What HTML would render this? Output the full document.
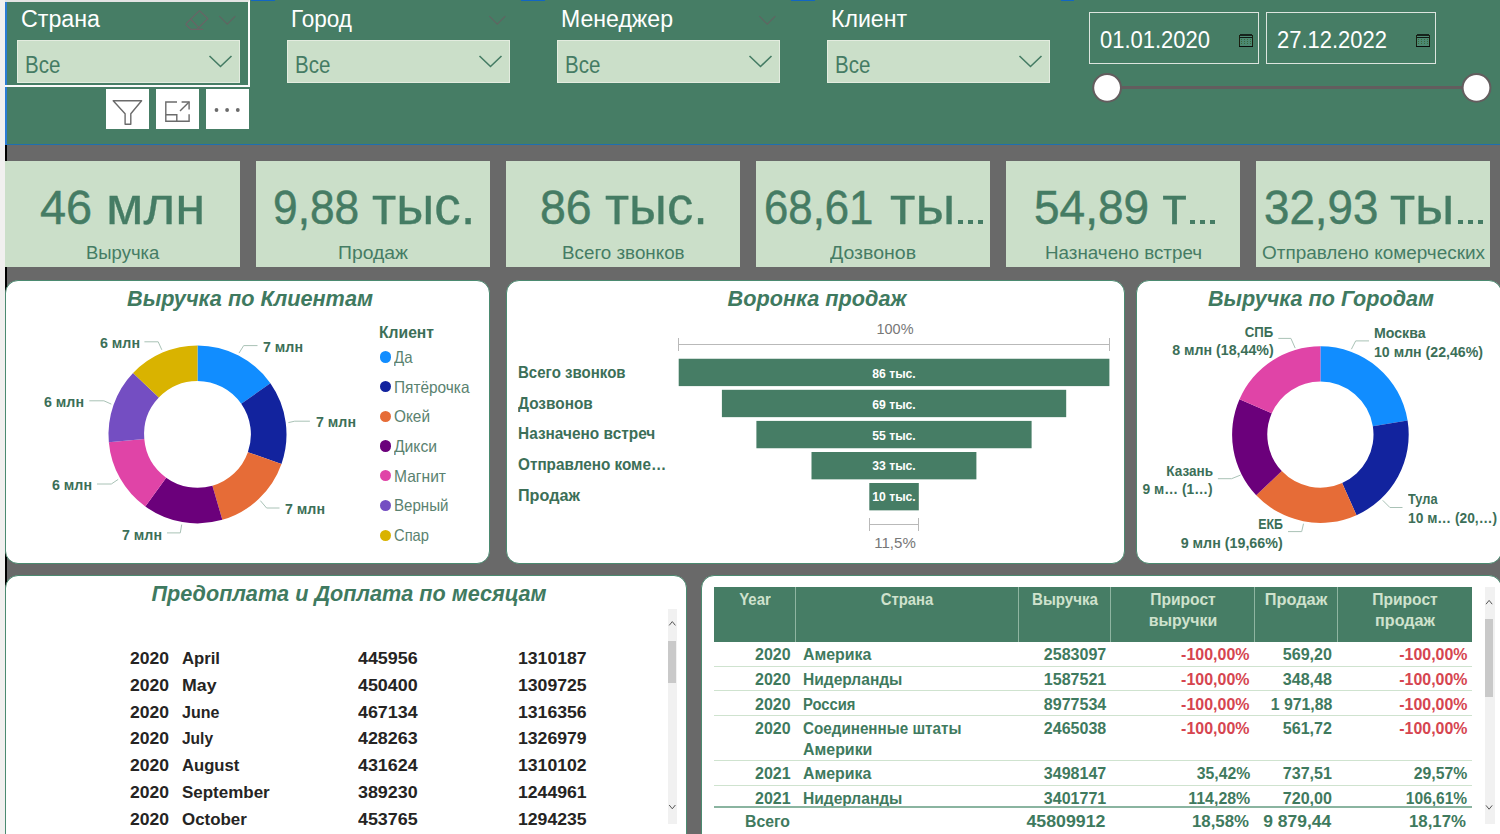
<!DOCTYPE html>
<html><head><meta charset="utf-8"><title>Dashboard</title>
<style>
html,body{margin:0;padding:0;}
body{width:1500px;height:834px;overflow:hidden;position:relative;background:#696969;font-family:"Liberation Sans", sans-serif;}
#c{position:absolute;left:0;top:0;width:1500px;height:834px;overflow:hidden;}
#c div{position:absolute;box-sizing:border-box;}
#c svg{position:absolute;left:0;top:0;overflow:visible;}
.t{white-space:nowrap;}
.p{background:#fff;border:1px solid #4b8a70;border-radius:13px;}
</style></head><body><div id="c">
<div style="left:0px;top:0px;width:1500px;height:144px;background:#467d65;"></div>
<div style="left:0px;top:144px;width:1500px;height:1px;background:#1f6fb0;"></div>
<div style="left:0px;top:0px;width:5px;height:834px;background:#f1f0ef;"></div>
<div style="left:5px;top:0px;width:2px;height:145px;background:#2b7cd3;"></div>
<div style="left:5px;top:145px;width:2px;height:689px;background:#000;"></div>
<div class="t" style="font-size:23px;line-height:23px;color:#fff;left:21px;top:7.51px;transform:scaleX(1.0098);transform-origin:left center;"><span>Страна</span></div>
<div style="left:17px;top:40px;width:223px;height:43px;background:#cbdfc9;border:1px solid #e3ecdf;"></div>
<div class="t" style="font-size:23px;line-height:23px;color:#457c64;left:25.3px;top:53.6px;transform:scaleX(0.893);transform-origin:left center;"><span>Все</span></div>
<svg width="1500" height="834"><path d="M209.5,56 L220.5,66.5 L231.5,56" fill="none" stroke="#457c64" stroke-width="1.6"/><path d="M219.3,16.1 L227.3,24.1 L235.3,16.1" fill="none" stroke="#5f6562" stroke-width="1.3"/></svg>
<div class="t" style="font-size:23px;line-height:23px;color:#fff;left:291px;top:7.51px;transform:scaleX(0.9804);transform-origin:left center;"><span>Город</span></div>
<div style="left:287px;top:40px;width:223px;height:43px;background:#cbdfc9;border:1px solid #e3ecdf;"></div>
<div class="t" style="font-size:23px;line-height:23px;color:#457c64;left:295.3px;top:53.6px;transform:scaleX(0.893);transform-origin:left center;"><span>Все</span></div>
<svg width="1500" height="834"><path d="M479.5,56 L490.5,66.5 L501.5,56" fill="none" stroke="#457c64" stroke-width="1.6"/><path d="M489.3,16.1 L497.3,24.1 L505.3,16.1" fill="none" stroke="#5f6562" stroke-width="1.3"/></svg>
<div class="t" style="font-size:23px;line-height:23px;color:#fff;left:561px;top:7.51px;transform:scaleX(1.0036);transform-origin:left center;"><span>Менеджер</span></div>
<div style="left:557px;top:40px;width:223px;height:43px;background:#cbdfc9;border:1px solid #e3ecdf;"></div>
<div class="t" style="font-size:23px;line-height:23px;color:#457c64;left:565.3px;top:53.6px;transform:scaleX(0.893);transform-origin:left center;"><span>Все</span></div>
<svg width="1500" height="834"><path d="M749.5,56 L760.5,66.5 L771.5,56" fill="none" stroke="#457c64" stroke-width="1.6"/><path d="M759.3,16.1 L767.3,24.1 L775.3,16.1" fill="none" stroke="#5f6562" stroke-width="1.3"/></svg>
<div class="t" style="font-size:23px;line-height:23px;color:#fff;left:831px;top:7.51px;transform:scaleX(1.0039);transform-origin:left center;"><span>Клиент</span></div>
<div style="left:827px;top:40px;width:223px;height:43px;background:#cbdfc9;border:1px solid #e3ecdf;"></div>
<div class="t" style="font-size:23px;line-height:23px;color:#457c64;left:835.3px;top:53.6px;transform:scaleX(0.893);transform-origin:left center;"><span>Все</span></div>
<svg width="1500" height="834"><path d="M1019.5,56 L1030.5,66.5 L1041.5,56" fill="none" stroke="#457c64" stroke-width="1.6"/></svg>
<div style="left:5px;top:0px;width:245px;height:87px;background:transparent;border:2px solid #fbfbfb;border-top-color:#e4e4e4;border-left:0;"></div>
<div style="left:106px;top:89px;width:43px;height:40px;background:#fff;"></div>
<div style="left:156px;top:89px;width:43px;height:40px;background:#fff;"></div>
<div style="left:206px;top:89px;width:43px;height:40px;background:#fff;"></div>
<div style="left:1089px;top:12px;width:170px;height:52px;background:transparent;border:1px solid #dde5df;"></div>
<div style="left:1266px;top:12px;width:170px;height:52px;background:transparent;border:1px solid #dde5df;"></div>
<div class="t" style="font-size:23px;line-height:23px;color:#fff;left:1100px;top:29.01px;transform:scaleX(0.9555);transform-origin:left center;"><span>01.01.2020</span></div>
<div class="t" style="font-size:23px;line-height:23px;color:#fff;left:1277px;top:29.01px;transform:scaleX(0.9555);transform-origin:left center;"><span>27.12.2022</span></div>
<div style="left:1107px;top:86.3px;width:370px;height:3px;background:#635d5e;"></div>
<svg width="1500" height="834"><circle cx="1107.1" cy="87.8" r="13.9" fill="#fff" stroke="#635d5e" stroke-width="2"/><circle cx="1476.5" cy="87.8" r="13.9" fill="#fff" stroke="#635d5e" stroke-width="2"/></svg>
<div style="left:5px;top:161px;width:235px;height:106px;background:#cbdfc9;"></div>
<div class="t" style="font-size:49px;line-height:49px;color:#457c64;-webkit-text-stroke:0.5px #457c64;left:39.8px;top:182.81px;transform:scaleX(0.9557);transform-origin:left center;"><span>46</span></div>
<div class="t" style="font-size:53.5px;line-height:53.5px;color:#457c64;-webkit-text-stroke:0.3px #457c64;left:106.2px;top:179.01px;transform:scaleX(1.018);transform-origin:left center;"><span>млн</span></div>
<div class="t" style="font-size:17.5px;line-height:17.5px;color:#457c64;left:85.7px;top:244.52px;transform:scaleX(1.0556);transform-origin:left center;"><span>Выручка</span></div>
<div style="left:256px;top:161px;width:234px;height:106px;background:#cbdfc9;"></div>
<div class="t" style="font-size:49px;line-height:49px;color:#457c64;-webkit-text-stroke:0.5px #457c64;left:272.9px;top:182.81px;transform:scaleX(0.9038);transform-origin:left center;"><span>9,88</span></div>
<div class="t" style="font-size:53.5px;line-height:53.5px;color:#457c64;-webkit-text-stroke:0.3px #457c64;left:372px;top:179.01px;transform:scaleX(0.9897);transform-origin:left center;"><span>тыс.</span></div>
<div class="t" style="font-size:17.5px;line-height:17.5px;color:#457c64;left:338px;top:244.52px;transform:scaleX(1.1056);transform-origin:left center;"><span>Продаж</span></div>
<div style="left:506px;top:161px;width:234px;height:106px;background:#cbdfc9;"></div>
<div class="t" style="font-size:49px;line-height:49px;color:#457c64;-webkit-text-stroke:0.5px #457c64;left:540.2px;top:182.81px;transform:scaleX(0.9484);transform-origin:left center;"><span>86</span></div>
<div class="t" style="font-size:53.5px;line-height:53.5px;color:#457c64;-webkit-text-stroke:0.3px #457c64;left:604.7px;top:179.01px;transform:scaleX(0.983);transform-origin:left center;"><span>тыс.</span></div>
<div class="t" style="font-size:17.5px;line-height:17.5px;color:#457c64;left:561.7px;top:244.52px;transform:scaleX(1.074);transform-origin:left center;"><span>Всего звонков</span></div>
<div style="left:756px;top:161px;width:234px;height:106px;background:#cbdfc9;"></div>
<div class="t" style="font-size:49px;line-height:49px;color:#457c64;-webkit-text-stroke:0.5px #457c64;left:764.2px;top:182.81px;transform:scaleX(0.8922);transform-origin:left center;"><span>68,61</span></div>
<div class="t" style="font-size:53.5px;line-height:53.5px;color:#457c64;-webkit-text-stroke:0.3px #457c64;left:889.7px;top:179.01px;transform:scaleX(1.037);transform-origin:left center;"><span>ты</span></div>
<div style="left:978.3px;top:219.8px;width:5px;height:4.6px;background:#457c64;"></div>
<div style="left:968.2px;top:219.8px;width:5px;height:4.6px;background:#457c64;"></div>
<div style="left:958.1px;top:219.8px;width:5px;height:4.6px;background:#457c64;"></div>
<div class="t" style="font-size:17.5px;line-height:17.5px;color:#457c64;left:830px;top:244.52px;transform:scaleX(1.1148);transform-origin:left center;"><span>Дозвонов</span></div>
<div style="left:1006px;top:161px;width:234px;height:106px;background:#cbdfc9;"></div>
<div class="t" style="font-size:49px;line-height:49px;color:#457c64;-webkit-text-stroke:0.5px #457c64;left:1033.5px;top:182.81px;transform:scaleX(0.9386);transform-origin:left center;"><span>54,89</span></div>
<div class="t" style="font-size:53.5px;line-height:53.5px;color:#457c64;-webkit-text-stroke:0.3px #457c64;left:1162.3px;top:179.01px;"><span>т</span></div>
<div style="left:1210.0px;top:219.8px;width:5px;height:4.6px;background:#457c64;"></div>
<div style="left:1199.9px;top:219.8px;width:5px;height:4.6px;background:#457c64;"></div>
<div style="left:1189.8px;top:219.8px;width:5px;height:4.6px;background:#457c64;"></div>
<div class="t" style="font-size:17.5px;line-height:17.5px;color:#457c64;left:1045px;top:244.52px;transform:scaleX(1.074);transform-origin:left center;"><span>Назначено встреч</span></div>
<div style="left:1256px;top:161px;width:234px;height:106px;background:#cbdfc9;"></div>
<div class="t" style="font-size:49px;line-height:49px;color:#457c64;-webkit-text-stroke:0.5px #457c64;left:1263.5px;top:182.81px;transform:scaleX(0.9329);transform-origin:left center;"><span>32,93</span></div>
<div class="t" style="font-size:53.5px;line-height:53.5px;color:#457c64;-webkit-text-stroke:0.3px #457c64;left:1390.4px;top:179.01px;transform:scaleX(1.0243);transform-origin:left center;"><span>ты</span></div>
<div style="left:1478.2px;top:219.8px;width:5px;height:4.6px;background:#457c64;"></div>
<div style="left:1468.1px;top:219.8px;width:5px;height:4.6px;background:#457c64;"></div>
<div style="left:1458.0px;top:219.8px;width:5px;height:4.6px;background:#457c64;"></div>
<div class="t" style="font-size:17.5px;line-height:17.5px;color:#457c64;left:1262.3px;top:244.52px;transform:scaleX(1.0817);transform-origin:left center;"><span>Отправлено комерческих</span></div>
<div class="p" style="left:5px;top:280px;width:485px;height:284px"></div>
<div class="p" style="left:506px;top:280px;width:619px;height:284px"></div>
<div class="p" style="left:1136px;top:280px;width:366px;height:284px"></div>
<div class="p" style="left:5px;top:575px;width:682px;height:280px"></div>
<div class="p" style="left:701px;top:575px;width:801px;height:280px"></div>
<div class="t" style="font-size:22px;line-height:22px;color:#3f7a60;font-weight:700;font-style:italic;left:-150.0px;width:800px;text-align:center;top:288.0px;transform:scaleX(0.9855);transform-origin:center center;"><span>Выручка по Клиентам</span></div>
<svg width="1500" height="834"><path d="M197.50,345.40A89,89 0 0 1 270.40,383.35L241.24,403.77A53.4,53.4 0 0 0 197.50,381.00Z" fill="#118DFF"/><path d="M270.40,383.35A89,89 0 0 1 281.45,463.96L247.87,452.14A53.4,53.4 0 0 0 241.24,403.77Z" fill="#12239E"/><path d="M281.45,463.96A89,89 0 0 1 222.33,519.87L212.40,485.68A53.4,53.4 0 0 0 247.87,452.14Z" fill="#E66C37"/><path d="M222.33,519.87A89,89 0 0 1 145.31,506.49L166.19,477.66A53.4,53.4 0 0 0 212.40,485.68Z" fill="#6B007B"/><path d="M145.31,506.49A89,89 0 0 1 108.84,442.16L144.30,439.05A53.4,53.4 0 0 0 166.19,477.66Z" fill="#E044A7"/><path d="M108.84,442.16A89,89 0 0 1 133.05,373.02L158.83,397.57A53.4,53.4 0 0 0 144.30,439.05Z" fill="#744EC2"/><path d="M133.05,373.02A89,89 0 0 1 197.50,345.40L197.50,381.00A53.4,53.4 0 0 0 158.83,397.57Z" fill="#D9B300"/><polyline points="239,353.1 243.7,345.6 257.5,345.6" fill="none" stroke="#a9c2b6" stroke-width="1"/><polyline points="288.4,422.6 294.7,421.2 309.9,421.2" fill="none" stroke="#a9c2b6" stroke-width="1"/><polyline points="260.3,500.6 266.6,508 279.5,508" fill="none" stroke="#a9c2b6" stroke-width="1"/><polyline points="181.7,524.6 180.3,532.9 167,532.9" fill="none" stroke="#a9c2b6" stroke-width="1"/><polyline points="118.2,479.4 111.3,484 97,484" fill="none" stroke="#a9c2b6" stroke-width="1"/><polyline points="111.3,404.1 103.9,400.8 89.3,400.8" fill="none" stroke="#a9c2b6" stroke-width="1"/><polyline points="161.8,349.8 158.2,341.8 144.4,341.8" fill="none" stroke="#a9c2b6" stroke-width="1"/></svg>
<div class="t" style="font-size:14.5px;line-height:14.5px;color:#3c6f58;font-weight:700;left:262.5px;top:339.7px;transform:scaleX(0.9805);transform-origin:left center;"><span>7 млн</span></div>
<div class="t" style="font-size:14.5px;line-height:14.5px;color:#3c6f58;font-weight:700;left:315.7px;top:415.0px;transform:scaleX(0.9805);transform-origin:left center;"><span>7 млн</span></div>
<div class="t" style="font-size:14.5px;line-height:14.5px;color:#3c6f58;font-weight:700;left:285.4px;top:501.91px;transform:scaleX(0.9805);transform-origin:left center;"><span>7 млн</span></div>
<div class="t" style="font-size:14.5px;line-height:14.5px;color:#3c6f58;font-weight:700;left:121.9px;top:527.81px;transform:scaleX(0.9805);transform-origin:left center;"><span>7 млн</span></div>
<div class="t" style="font-size:14.5px;line-height:14.5px;color:#3c6f58;font-weight:700;left:51.5px;top:477.61px;transform:scaleX(0.9805);transform-origin:left center;"><span>6 млн</span></div>
<div class="t" style="font-size:14.5px;line-height:14.5px;color:#3c6f58;font-weight:700;left:44.1px;top:395.11px;transform:scaleX(0.9805);transform-origin:left center;"><span>6 млн</span></div>
<div class="t" style="font-size:14.5px;line-height:14.5px;color:#3c6f58;font-weight:700;left:99.8px;top:335.61px;transform:scaleX(0.9805);transform-origin:left center;"><span>6 млн</span></div>
<div class="t" style="font-size:16.5px;line-height:16.5px;color:#3c6f58;font-weight:700;left:379px;top:323.6px;transform:scaleX(0.9496);transform-origin:left center;"><span>Клиент</span></div>
<div style="left:379.7px;top:351.4px;width:11.2px;height:11.2px;background:#118DFF;border-radius:50%;"></div>
<div class="t" style="font-size:16.5px;line-height:16.5px;color:#5a8270;left:394px;top:348.81px;transform:scaleX(0.9087);transform-origin:left center;"><span>Да</span></div>
<div style="left:379.7px;top:381.1px;width:11.2px;height:11.2px;background:#12239E;border-radius:50%;"></div>
<div class="t" style="font-size:16.5px;line-height:16.5px;color:#5a8270;left:394px;top:378.51px;transform:scaleX(0.9335);transform-origin:left center;"><span>Пятёрочка</span></div>
<div style="left:379.7px;top:410.8px;width:11.2px;height:11.2px;background:#E66C37;border-radius:50%;"></div>
<div class="t" style="font-size:16.5px;line-height:16.5px;color:#5a8270;left:394px;top:408.2px;transform:scaleX(0.9317);transform-origin:left center;"><span>Окей</span></div>
<div style="left:379.7px;top:440.4px;width:11.2px;height:11.2px;background:#6B007B;border-radius:50%;"></div>
<div class="t" style="font-size:16.5px;line-height:16.5px;color:#5a8270;left:394px;top:437.81px;transform:scaleX(0.9499);transform-origin:left center;"><span>Дикси</span></div>
<div style="left:379.7px;top:470.1px;width:11.2px;height:11.2px;background:#E044A7;border-radius:50%;"></div>
<div class="t" style="font-size:16.5px;line-height:16.5px;color:#5a8270;left:394px;top:467.51px;transform:scaleX(0.9452);transform-origin:left center;"><span>Магнит</span></div>
<div style="left:379.7px;top:499.8px;width:11.2px;height:11.2px;background:#744EC2;border-radius:50%;"></div>
<div class="t" style="font-size:16.5px;line-height:16.5px;color:#5a8270;left:394px;top:497.2px;transform:scaleX(0.9152);transform-origin:left center;"><span>Верный</span></div>
<div style="left:379.7px;top:529.5px;width:11.2px;height:11.2px;background:#D9B300;border-radius:50%;"></div>
<div class="t" style="font-size:16.5px;line-height:16.5px;color:#5a8270;left:394px;top:526.9px;transform:scaleX(0.8924);transform-origin:left center;"><span>Спар</span></div>
<div class="t" style="font-size:22px;line-height:22px;color:#3f7a60;font-weight:700;font-style:italic;left:921.0px;width:800px;text-align:center;top:288.0px;transform:scaleX(0.9817);transform-origin:center center;"><span>Выручка по Городам</span></div>
<svg width="1500" height="834"><path d="M1320.40,346.30A88.3,88.3 0 0 1 1407.58,420.57L1372.83,426.17A53.1,53.1 0 0 0 1320.40,381.50Z" fill="#118DFF"/><path d="M1407.58,420.57A88.3,88.3 0 0 1 1356.51,515.18L1342.12,483.06A53.1,53.1 0 0 0 1372.83,426.17Z" fill="#12239E"/><path d="M1356.51,515.18A88.3,88.3 0 0 1 1256.20,495.23L1281.79,471.06A53.1,53.1 0 0 0 1342.12,483.06Z" fill="#E66C37"/><path d="M1256.20,495.23A88.3,88.3 0 0 1 1239.50,399.22L1271.75,413.32A53.1,53.1 0 0 0 1281.79,471.06Z" fill="#6B007B"/><path d="M1239.50,399.22A88.3,88.3 0 0 1 1320.40,346.30L1320.40,381.50A53.1,53.1 0 0 0 1271.75,413.32Z" fill="#E044A7"/><polyline points="1295.2,348.1 1290.9,338.4 1278.3,338.4" fill="none" stroke="#a9c2b6" stroke-width="1"/><polyline points="1351.4,349.2 1355.7,340.9 1369,340.9" fill="none" stroke="#a9c2b6" stroke-width="1"/><polyline points="1382.7,500.3 1389.9,507.5 1402.5,507.5" fill="none" stroke="#a9c2b6" stroke-width="1"/><polyline points="1303.5,523.7 1301.7,531.6 1288,531.6" fill="none" stroke="#a9c2b6" stroke-width="1"/><polyline points="1240.5,475.1 1231.6,478.7 1217.9,478.7" fill="none" stroke="#a9c2b6" stroke-width="1"/></svg>
<div class="t" style="font-size:14.5px;line-height:14.5px;color:#3c6f58;font-weight:700;right:226.3px;top:324.61px;transform:scaleX(0.9097);transform-origin:right center;"><span>СПБ</span></div>
<div class="t" style="font-size:14.5px;line-height:14.5px;color:#3c6f58;font-weight:700;right:226.8px;top:343.31px;transform:scaleX(0.9792);transform-origin:right center;"><span>8 млн (18,44%)</span></div>
<div class="t" style="font-size:14.5px;line-height:14.5px;color:#3c6f58;font-weight:700;left:1374.4px;top:326.41px;transform:scaleX(0.9762);transform-origin:left center;"><span>Москва</span></div>
<div class="t" style="font-size:14.5px;line-height:14.5px;color:#3c6f58;font-weight:700;left:1374.4px;top:345.0px;transform:scaleX(0.9757);transform-origin:left center;"><span>10 млн (22,46%)</span></div>
<div class="t" style="font-size:14.5px;line-height:14.5px;color:#3c6f58;font-weight:700;left:1407.9px;top:491.91px;transform:scaleX(0.8814);transform-origin:left center;"><span>Тула</span></div>
<div class="t" style="font-size:14.5px;line-height:14.5px;color:#3c6f58;font-weight:700;left:1407.9px;top:510.61px;transform:scaleX(0.9495);transform-origin:left center;"><span>10 м… (20,…)</span></div>
<div class="t" style="font-size:14.5px;line-height:14.5px;color:#3c6f58;font-weight:700;right:217.4px;top:517.02px;transform:scaleX(0.8566);transform-origin:right center;"><span>ЕКБ</span></div>
<div class="t" style="font-size:14.5px;line-height:14.5px;color:#3c6f58;font-weight:700;right:217.4px;top:535.81px;transform:scaleX(0.984);transform-origin:right center;"><span>9 млн (19,66%)</span></div>
<div class="t" style="font-size:14.5px;line-height:14.5px;color:#3c6f58;font-weight:700;right:287.2px;top:463.81px;transform:scaleX(0.9354);transform-origin:right center;"><span>Казань</span></div>
<div class="t" style="font-size:14.5px;line-height:14.5px;color:#3c6f58;font-weight:700;right:287.2px;top:482.2px;transform:scaleX(0.9514);transform-origin:right center;"><span>9 м… (1…)</span></div>
<div class="t" style="font-size:22px;line-height:22px;color:#3f7a60;font-weight:700;font-style:italic;left:417.0px;width:800px;text-align:center;top:288.0px;transform:scaleX(0.9856);transform-origin:center center;"><span>Воронка продаж</span></div>
<svg width="1500" height="834"><rect x="678.7" y="358.75" width="430.7" height="27.35" fill="#467d65"/></svg>
<div class="t" style="font-size:12px;line-height:12px;color:#fff;font-weight:700;left:494.3px;width:800px;text-align:center;top:367.75px;transform:scaleX(1.0157);transform-origin:center center;"><span>86 тыс.</span></div>
<div class="t" style="font-size:16.5px;line-height:16.5px;color:#3c6f58;font-weight:700;left:518.2px;top:363.76px;transform:scaleX(0.9116);transform-origin:left center;"><span>Всего звонков</span></div>
<svg width="1500" height="834"><rect x="721.9" y="389.8" width="344.3" height="27.35" fill="#467d65"/></svg>
<div class="t" style="font-size:12px;line-height:12px;color:#fff;font-weight:700;left:494.3px;width:800px;text-align:center;top:398.63px;transform:scaleX(1.0157);transform-origin:center center;"><span>69 тыс.</span></div>
<div class="t" style="font-size:16.5px;line-height:16.5px;color:#3c6f58;font-weight:700;left:518.2px;top:394.62px;transform:scaleX(0.9325);transform-origin:left center;"><span>Дозвонов</span></div>
<svg width="1500" height="834"><rect x="756.4" y="420.9" width="275.2" height="27.35" fill="#467d65"/></svg>
<div class="t" style="font-size:12px;line-height:12px;color:#fff;font-weight:700;left:494.3px;width:800px;text-align:center;top:429.5px;transform:scaleX(1.0157);transform-origin:center center;"><span>55 тыс.</span></div>
<div class="t" style="font-size:16.5px;line-height:16.5px;color:#3c6f58;font-weight:700;left:518.2px;top:425.49px;transform:scaleX(0.9338);transform-origin:left center;"><span>Назначено встреч</span></div>
<svg width="1500" height="834"><rect x="811.5" y="452.0" width="164.9" height="27.35" fill="#467d65"/></svg>
<div class="t" style="font-size:12px;line-height:12px;color:#fff;font-weight:700;left:494.3px;width:800px;text-align:center;top:460.36px;transform:scaleX(1.0157);transform-origin:center center;"><span>33 тыс.</span></div>
<div class="t" style="font-size:16.5px;line-height:16.5px;color:#3c6f58;font-weight:700;left:518.2px;top:456.37px;transform:scaleX(0.9267);transform-origin:left center;"><span>Отправлено коме…</span></div>
<svg width="1500" height="834"><rect x="869.3" y="483.0" width="49.5" height="27.35" fill="#467d65"/></svg>
<div class="t" style="font-size:12px;line-height:12px;color:#fff;font-weight:700;left:494.3px;width:800px;text-align:center;top:491.24px;transform:scaleX(1.0157);transform-origin:center center;"><span>10 тыс.</span></div>
<div class="t" style="font-size:16.5px;line-height:16.5px;color:#3c6f58;font-weight:700;left:518.2px;top:487.23px;transform:scaleX(0.9801);transform-origin:left center;"><span>Продаж</span></div>
<svg width="1500" height="834" shape-rendering="crispEdges"><g stroke="#b9b9b9" stroke-width="1" fill="none"><path d="M678.5,337.5V351M678.5,344.5H1109.5M1109.5,337.5V351"/><path d="M869.5,518V531M869.5,524.5H918.5M918.5,518V531"/></g></svg>
<div class="t" style="font-size:15.5px;line-height:15.5px;color:#777;left:494.5px;width:800px;text-align:center;top:320.71px;transform:scaleX(0.933);transform-origin:center center;"><span>100%</span></div>
<div class="t" style="font-size:15.5px;line-height:15.5px;color:#777;left:494.5px;width:800px;text-align:center;top:534.82px;transform:scaleX(0.9693);transform-origin:center center;"><span>11,5%</span></div>
<div class="t" style="font-size:22px;line-height:22px;color:#3f7a60;font-weight:700;font-style:italic;left:-51.5px;width:800px;text-align:center;top:583.0px;transform:scaleX(0.9835);transform-origin:center center;"><span>Предоплата и Доплата по месяцам</span></div>
<div class="t" style="font-size:16px;line-height:16px;color:#252423;font-weight:700;left:130px;top:650.81px;transform:scaleX(1.0957);transform-origin:left center;"><span>2020</span></div>
<div class="t" style="font-size:16px;line-height:16px;color:#252423;font-weight:700;left:181.6px;top:650.81px;transform:scaleX(1.0424);transform-origin:left center;"><span>April</span></div>
<div class="t" style="font-size:16px;line-height:16px;color:#252423;font-weight:700;left:358.3px;top:650.81px;transform:scaleX(1.1163);transform-origin:left center;"><span>445956</span></div>
<div class="t" style="font-size:16px;line-height:16px;color:#252423;font-weight:700;left:517.6px;top:650.81px;transform:scaleX(1.1012);transform-origin:left center;"><span>1310187</span></div>
<div class="t" style="font-size:16px;line-height:16px;color:#252423;font-weight:700;left:130px;top:677.68px;transform:scaleX(1.0957);transform-origin:left center;"><span>2020</span></div>
<div class="t" style="font-size:16px;line-height:16px;color:#252423;font-weight:700;left:181.6px;top:677.68px;transform:scaleX(1.1084);transform-origin:left center;"><span>May</span></div>
<div class="t" style="font-size:16px;line-height:16px;color:#252423;font-weight:700;left:358.3px;top:677.68px;transform:scaleX(1.1163);transform-origin:left center;"><span>450400</span></div>
<div class="t" style="font-size:16px;line-height:16px;color:#252423;font-weight:700;left:517.6px;top:677.68px;transform:scaleX(1.1012);transform-origin:left center;"><span>1309725</span></div>
<div class="t" style="font-size:16px;line-height:16px;color:#252423;font-weight:700;left:130px;top:704.57px;transform:scaleX(1.0957);transform-origin:left center;"><span>2020</span></div>
<div class="t" style="font-size:16px;line-height:16px;color:#252423;font-weight:700;left:181.6px;top:704.57px;transform:scaleX(0.9988);transform-origin:left center;"><span>June</span></div>
<div class="t" style="font-size:16px;line-height:16px;color:#252423;font-weight:700;left:358.3px;top:704.57px;transform:scaleX(1.1163);transform-origin:left center;"><span>467134</span></div>
<div class="t" style="font-size:16px;line-height:16px;color:#252423;font-weight:700;left:517.6px;top:704.57px;transform:scaleX(1.1012);transform-origin:left center;"><span>1316356</span></div>
<div class="t" style="font-size:16px;line-height:16px;color:#252423;font-weight:700;left:130px;top:731.45px;transform:scaleX(1.0957);transform-origin:left center;"><span>2020</span></div>
<div class="t" style="font-size:16px;line-height:16px;color:#252423;font-weight:700;left:181.6px;top:731.45px;transform:scaleX(0.9683);transform-origin:left center;"><span>July</span></div>
<div class="t" style="font-size:16px;line-height:16px;color:#252423;font-weight:700;left:358.3px;top:731.45px;transform:scaleX(1.1163);transform-origin:left center;"><span>428263</span></div>
<div class="t" style="font-size:16px;line-height:16px;color:#252423;font-weight:700;left:517.6px;top:731.45px;transform:scaleX(1.1012);transform-origin:left center;"><span>1326979</span></div>
<div class="t" style="font-size:16px;line-height:16px;color:#252423;font-weight:700;left:130px;top:758.32px;transform:scaleX(1.0957);transform-origin:left center;"><span>2020</span></div>
<div class="t" style="font-size:16px;line-height:16px;color:#252423;font-weight:700;left:181.6px;top:758.32px;transform:scaleX(1.0398);transform-origin:left center;"><span>August</span></div>
<div class="t" style="font-size:16px;line-height:16px;color:#252423;font-weight:700;left:358.3px;top:758.32px;transform:scaleX(1.1163);transform-origin:left center;"><span>431624</span></div>
<div class="t" style="font-size:16px;line-height:16px;color:#252423;font-weight:700;left:517.6px;top:758.32px;transform:scaleX(1.1012);transform-origin:left center;"><span>1310102</span></div>
<div class="t" style="font-size:16px;line-height:16px;color:#252423;font-weight:700;left:130px;top:785.21px;transform:scaleX(1.0957);transform-origin:left center;"><span>2020</span></div>
<div class="t" style="font-size:16px;line-height:16px;color:#252423;font-weight:700;left:181.6px;top:785.21px;transform:scaleX(1.0604);transform-origin:left center;"><span>September</span></div>
<div class="t" style="font-size:16px;line-height:16px;color:#252423;font-weight:700;left:358.3px;top:785.21px;transform:scaleX(1.1163);transform-origin:left center;"><span>389230</span></div>
<div class="t" style="font-size:16px;line-height:16px;color:#252423;font-weight:700;left:517.6px;top:785.21px;transform:scaleX(1.1012);transform-origin:left center;"><span>1244961</span></div>
<div class="t" style="font-size:16px;line-height:16px;color:#252423;font-weight:700;left:130px;top:812.09px;transform:scaleX(1.0957);transform-origin:left center;"><span>2020</span></div>
<div class="t" style="font-size:16px;line-height:16px;color:#252423;font-weight:700;left:181.6px;top:812.09px;transform:scaleX(1.0547);transform-origin:left center;"><span>October</span></div>
<div class="t" style="font-size:16px;line-height:16px;color:#252423;font-weight:700;left:358.3px;top:812.09px;transform:scaleX(1.1163);transform-origin:left center;"><span>453765</span></div>
<div class="t" style="font-size:16px;line-height:16px;color:#252423;font-weight:700;left:517.6px;top:812.09px;transform:scaleX(1.1012);transform-origin:left center;"><span>1294235</span></div>
<div style="left:668px;top:609px;width:8.5px;height:215px;background:#f1f1f1;"></div>
<div style="left:668px;top:640.5px;width:8px;height:42px;background:#c9c9c9;"></div>
<svg width="1500" height="834"><g stroke="#555" stroke-width="1" fill="none"><path d="M669.2,625.4L672.3,621.6L675.4,625.4"/><path d="M669.2,805L672.3,808.8L675.4,805"/></g></svg>
<div style="left:714.3px;top:586.8px;width:758.1px;height:55px;background:#467d65;"></div>
<div style="left:795px;top:586.8px;width:1px;height:55px;background:#8fb5a1;"></div>
<div style="left:1018px;top:586.8px;width:1px;height:55px;background:#8fb5a1;"></div>
<div style="left:1110px;top:586.8px;width:1px;height:55px;background:#8fb5a1;"></div>
<div style="left:1254px;top:586.8px;width:1px;height:55px;background:#8fb5a1;"></div>
<div style="left:1337px;top:586.8px;width:1px;height:55px;background:#8fb5a1;"></div>
<div class="t" style="font-size:16px;line-height:16px;color:#cfe2cd;font-weight:700;left:355.3px;width:800px;text-align:center;top:592.21px;transform:scaleX(0.9316);transform-origin:center center;"><span>Year</span></div>
<div class="t" style="font-size:16px;line-height:16px;color:#cfe2cd;font-weight:700;left:507.0px;width:800px;text-align:center;top:592.21px;transform:scaleX(0.9272);transform-origin:center center;"><span>Страна</span></div>
<div class="t" style="font-size:16px;line-height:16px;color:#cfe2cd;font-weight:700;left:664.5px;width:800px;text-align:center;top:592.21px;transform:scaleX(0.9445);transform-origin:center center;"><span>Выручка</span></div>
<div class="t" style="font-size:16px;line-height:16px;color:#cfe2cd;font-weight:700;left:783.0px;width:800px;text-align:center;top:592.21px;transform:scaleX(0.9749);transform-origin:center center;"><span>Прирост</span></div>
<div class="t" style="font-size:16px;line-height:16px;color:#cfe2cd;font-weight:700;left:783.0px;width:800px;text-align:center;top:612.6px;transform:scaleX(0.9914);transform-origin:center center;"><span>выручки</span></div>
<div class="t" style="font-size:16px;line-height:16px;color:#cfe2cd;font-weight:700;left:896.3px;width:800px;text-align:center;top:592.21px;transform:scaleX(1.0207);transform-origin:center center;"><span>Продаж</span></div>
<div class="t" style="font-size:16px;line-height:16px;color:#cfe2cd;font-weight:700;left:1005.0px;width:800px;text-align:center;top:592.21px;transform:scaleX(0.9749);transform-origin:center center;"><span>Прирост</span></div>
<div class="t" style="font-size:16px;line-height:16px;color:#cfe2cd;font-weight:700;left:1005.0px;width:800px;text-align:center;top:612.6px;transform:scaleX(1.0066);transform-origin:center center;"><span>продаж</span></div>
<div style="left:0;top:0;width:1500px;height:834px;clip-path:inset(643px 0px 27.6px 0px)">
<div class="t" style="font-size:16px;line-height:16px;color:#3f7a5e;font-weight:700;right:709.0px;top:646.81px;transform:scaleX(1.0002);transform-origin:right center;"><span>2020</span></div>
<div class="t" style="font-size:16px;line-height:16px;color:#3f7a5e;font-weight:700;left:802.6px;top:646.81px;transform:scaleX(0.994);transform-origin:left center;"><span>Америка</span></div>
<div class="t" style="font-size:16px;line-height:16px;color:#3f7a5e;font-weight:700;right:394.0px;top:646.81px;transform:scaleX(1.0033);transform-origin:right center;"><span>2583097</span></div>
<div class="t" style="font-size:16px;line-height:16px;color:#d64550;font-weight:700;right:250.2px;top:646.81px;transform:scaleX(0.9985);transform-origin:right center;"><span>-100,00%</span></div>
<div class="t" style="font-size:16px;line-height:16px;color:#3f7a5e;font-weight:700;right:168.2px;top:646.81px;transform:scaleX(1.0054);transform-origin:right center;"><span>569,20</span></div>
<div class="t" style="font-size:16px;line-height:16px;color:#d64550;font-weight:700;right:32.8px;top:646.81px;transform:scaleX(0.9956);transform-origin:right center;"><span>-100,00%</span></div>
<div class="t" style="font-size:16px;line-height:16px;color:#3f7a5e;font-weight:700;right:709.0px;top:671.6px;transform:scaleX(1.0002);transform-origin:right center;"><span>2020</span></div>
<div class="t" style="font-size:16px;line-height:16px;color:#3f7a5e;font-weight:700;left:802.6px;top:671.6px;transform:scaleX(0.9709);transform-origin:left center;"><span>Нидерланды</span></div>
<div class="t" style="font-size:16px;line-height:16px;color:#3f7a5e;font-weight:700;right:394.0px;top:671.6px;transform:scaleX(1.0033);transform-origin:right center;"><span>1587521</span></div>
<div class="t" style="font-size:16px;line-height:16px;color:#d64550;font-weight:700;right:250.2px;top:671.6px;transform:scaleX(0.9985);transform-origin:right center;"><span>-100,00%</span></div>
<div class="t" style="font-size:16px;line-height:16px;color:#3f7a5e;font-weight:700;right:168.2px;top:671.6px;transform:scaleX(1.0054);transform-origin:right center;"><span>348,48</span></div>
<div class="t" style="font-size:16px;line-height:16px;color:#d64550;font-weight:700;right:32.8px;top:671.6px;transform:scaleX(0.9956);transform-origin:right center;"><span>-100,00%</span></div>
<div class="t" style="font-size:16px;line-height:16px;color:#3f7a5e;font-weight:700;right:709.0px;top:696.51px;transform:scaleX(1.0002);transform-origin:right center;"><span>2020</span></div>
<div class="t" style="font-size:16px;line-height:16px;color:#3f7a5e;font-weight:700;left:802.6px;top:696.51px;transform:scaleX(0.9241);transform-origin:left center;"><span>Россия</span></div>
<div class="t" style="font-size:16px;line-height:16px;color:#3f7a5e;font-weight:700;right:394.0px;top:696.51px;transform:scaleX(1.0033);transform-origin:right center;"><span>8977534</span></div>
<div class="t" style="font-size:16px;line-height:16px;color:#d64550;font-weight:700;right:250.2px;top:696.51px;transform:scaleX(0.9985);transform-origin:right center;"><span>-100,00%</span></div>
<div class="t" style="font-size:16px;line-height:16px;color:#3f7a5e;font-weight:700;right:168.2px;top:696.51px;transform:scaleX(0.9891);transform-origin:right center;"><span>1 971,88</span></div>
<div class="t" style="font-size:16px;line-height:16px;color:#d64550;font-weight:700;right:32.8px;top:696.51px;transform:scaleX(0.9956);transform-origin:right center;"><span>-100,00%</span></div>
<div class="t" style="font-size:16px;line-height:16px;color:#3f7a5e;font-weight:700;right:709.0px;top:721.31px;transform:scaleX(1.0002);transform-origin:right center;"><span>2020</span></div>
<div class="t" style="font-size:16px;line-height:16px;color:#3f7a5e;font-weight:700;left:802.6px;top:721.31px;transform:scaleX(0.9503);transform-origin:left center;"><span>Соединенные штаты</span></div>
<div class="t" style="font-size:16px;line-height:16px;color:#3f7a5e;font-weight:700;right:394.0px;top:721.31px;transform:scaleX(1.0033);transform-origin:right center;"><span>2465038</span></div>
<div class="t" style="font-size:16px;line-height:16px;color:#d64550;font-weight:700;right:250.2px;top:721.31px;transform:scaleX(0.9985);transform-origin:right center;"><span>-100,00%</span></div>
<div class="t" style="font-size:16px;line-height:16px;color:#3f7a5e;font-weight:700;right:168.2px;top:721.31px;transform:scaleX(1.0054);transform-origin:right center;"><span>561,72</span></div>
<div class="t" style="font-size:16px;line-height:16px;color:#d64550;font-weight:700;right:32.8px;top:721.31px;transform:scaleX(0.9956);transform-origin:right center;"><span>-100,00%</span></div>
<div class="t" style="font-size:16px;line-height:16px;color:#3f7a5e;font-weight:700;right:709.0px;top:766.31px;transform:scaleX(1.0002);transform-origin:right center;"><span>2021</span></div>
<div class="t" style="font-size:16px;line-height:16px;color:#3f7a5e;font-weight:700;left:802.6px;top:766.31px;transform:scaleX(0.994);transform-origin:left center;"><span>Америка</span></div>
<div class="t" style="font-size:16px;line-height:16px;color:#3f7a5e;font-weight:700;right:394.0px;top:766.31px;transform:scaleX(1.0033);transform-origin:right center;"><span>3498147</span></div>
<div class="t" style="font-size:16px;line-height:16px;color:#3f7a5e;font-weight:700;right:250.2px;top:766.31px;transform:scaleX(0.9859);transform-origin:right center;"><span>35,42%</span></div>
<div class="t" style="font-size:16px;line-height:16px;color:#3f7a5e;font-weight:700;right:168.2px;top:766.31px;transform:scaleX(1.0054);transform-origin:right center;"><span>737,51</span></div>
<div class="t" style="font-size:16px;line-height:16px;color:#3f7a5e;font-weight:700;right:32.8px;top:766.31px;transform:scaleX(0.9859);transform-origin:right center;"><span>29,57%</span></div>
<div class="t" style="font-size:16px;line-height:16px;color:#3f7a5e;font-weight:700;right:709.0px;top:791.21px;transform:scaleX(1.0002);transform-origin:right center;"><span>2021</span></div>
<div class="t" style="font-size:16px;line-height:16px;color:#3f7a5e;font-weight:700;left:802.6px;top:791.21px;transform:scaleX(0.9709);transform-origin:left center;"><span>Нидерланды</span></div>
<div class="t" style="font-size:16px;line-height:16px;color:#3f7a5e;font-weight:700;right:394.0px;top:791.21px;transform:scaleX(1.0033);transform-origin:right center;"><span>3401771</span></div>
<div class="t" style="font-size:16px;line-height:16px;color:#3f7a5e;font-weight:700;right:250.2px;top:791.21px;transform:scaleX(0.9955);transform-origin:right center;"><span>114,28%</span></div>
<div class="t" style="font-size:16px;line-height:16px;color:#3f7a5e;font-weight:700;right:168.2px;top:791.21px;transform:scaleX(1.0054);transform-origin:right center;"><span>720,00</span></div>
<div class="t" style="font-size:16px;line-height:16px;color:#3f7a5e;font-weight:700;right:32.8px;top:791.21px;transform:scaleX(0.9704);transform-origin:right center;"><span>106,61%</span></div>
<div class="t" style="font-size:16px;line-height:16px;color:#3f7a5e;font-weight:700;left:802.6px;top:741.51px;transform:scaleX(0.995);transform-origin:left center;"><span>Америки</span></div>
</div>
<div style="left:714.3px;top:666px;width:758.1px;height:1px;background:#cfe3cf;"></div>
<div style="left:714.3px;top:690px;width:758.1px;height:1px;background:#cfe3cf;"></div>
<div style="left:714.3px;top:715px;width:758.1px;height:1px;background:#cfe3cf;"></div>
<div style="left:714.3px;top:760px;width:758.1px;height:1px;background:#cfe3cf;"></div>
<div style="left:714.3px;top:785px;width:758.1px;height:1px;background:#cfe3cf;"></div>
<div style="left:714.3px;top:806px;width:758.1px;height:1.5px;background:#8ab4a0;"></div>
<div class="t" style="font-size:16.5px;line-height:16.5px;color:#3f7a5e;font-weight:700;left:745px;top:812.81px;transform:scaleX(0.9571);transform-origin:left center;"><span>Всего</span></div>
<div class="t" style="font-size:16.5px;line-height:16.5px;color:#3f7a5e;font-weight:700;right:394.5px;top:812.81px;transform:scaleX(1.076);transform-origin:right center;"><span>45809912</span></div>
<div class="t" style="font-size:16.5px;line-height:16.5px;color:#3f7a5e;font-weight:700;right:251.4px;top:812.81px;transform:scaleX(1.0184);transform-origin:right center;"><span>18,58%</span></div>
<div class="t" style="font-size:16.5px;line-height:16.5px;color:#3f7a5e;font-weight:700;right:169.0px;top:812.81px;transform:scaleX(1.0586);transform-origin:right center;"><span>9 879,44</span></div>
<div class="t" style="font-size:16.5px;line-height:16.5px;color:#3f7a5e;font-weight:700;right:34.0px;top:812.81px;transform:scaleX(1.0184);transform-origin:right center;"><span>18,17%</span></div>
<div style="left:1484.5px;top:586.8px;width:10px;height:237px;background:#f1f1f1;"></div>
<div style="left:1484.5px;top:618.5px;width:8.5px;height:78.5px;background:#c9c9c9;"></div>
<svg width="1500" height="834"><g stroke="#555" stroke-width="1" fill="none"><path d="M1486,604.2L1489.1,600.4L1492.2,604.2"/><path d="M1486,805.4L1489.1,809.2L1492.2,805.4"/></g></svg>
<svg width="1500" height="834"><g fill="none" stroke="#6a6466" stroke-width="1.3" stroke-linejoin="round" stroke-linecap="round"><path d="M199.5,10.6L207.8,18.6L197,29.4H190.9L186.6,25.3Q185.5,24.2 186.6,23.1Z"/><path d="M190.9,19.4L198.6,27.6"/><path d="M197,29.4H202.6"/></g></svg>
<svg width="1500" height="834"><g fill="none" stroke="#6b6b6b" stroke-width="1.4"><path d="M113.2,100.7H141.6L130.8,113.8V124.3H125.1V113.8Z" stroke-linejoin="round"/><path d="M177,102H165.8V121.3H189.1V114.2"/><path d="M165.8,114.8H176.8V121.3"/><path d="M180,111L189.1,102"/><path d="M181.6,102H189.1V109.5"/></g><g fill="#6b6b6b"><circle cx="216.5" cy="110" r="1.9"/><circle cx="227.1" cy="110" r="1.9"/><circle cx="237.8" cy="110" r="1.9"/></g></svg>
<svg width="1500" height="834" shape-rendering="crispEdges"><rect x="1239" y="35" width="14" height="12" fill="#4b8871"/><rect x="1239.5" y="35.5" width="13" height="11" fill="none" stroke="#1a1f10" stroke-width="1"/><rect x="1240" y="34" width="12" height="2" fill="#16241c"/><rect x="1240" y="37" width="12" height="1" fill="#101a14"/><rect x="1239" y="46" width="14" height="1" fill="#0b0f0c"/><rect x="1241" y="39" width="1" height="1" fill="#3c6a3a"/><rect x="1241" y="41" width="1" height="1" fill="#3c6a3a"/><rect x="1241" y="43" width="1" height="1" fill="#3c6a3a"/><rect x="1244" y="39" width="1" height="1" fill="#3c6a3a"/><rect x="1244" y="41" width="1" height="1" fill="#3c6a3a"/><rect x="1244" y="43" width="1" height="1" fill="#3c6a3a"/><rect x="1247" y="39" width="1" height="1" fill="#3c6a3a"/><rect x="1247" y="41" width="1" height="1" fill="#3c6a3a"/><rect x="1247" y="43" width="1" height="1" fill="#3c6a3a"/><rect x="1250" y="39" width="1" height="1" fill="#3c6a3a"/><rect x="1250" y="41" width="1" height="1" fill="#3c6a3a"/><rect x="1250" y="43" width="1" height="1" fill="#3c6a3a"/></svg>
<svg width="1500" height="834" shape-rendering="crispEdges"><rect x="1416" y="35" width="14" height="12" fill="#4b8871"/><rect x="1416.5" y="35.5" width="13" height="11" fill="none" stroke="#1a1f10" stroke-width="1"/><rect x="1417" y="34" width="12" height="2" fill="#16241c"/><rect x="1417" y="37" width="12" height="1" fill="#101a14"/><rect x="1416" y="46" width="14" height="1" fill="#0b0f0c"/><rect x="1418" y="39" width="1" height="1" fill="#3c6a3a"/><rect x="1418" y="41" width="1" height="1" fill="#3c6a3a"/><rect x="1418" y="43" width="1" height="1" fill="#3c6a3a"/><rect x="1421" y="39" width="1" height="1" fill="#3c6a3a"/><rect x="1421" y="41" width="1" height="1" fill="#3c6a3a"/><rect x="1421" y="43" width="1" height="1" fill="#3c6a3a"/><rect x="1424" y="39" width="1" height="1" fill="#3c6a3a"/><rect x="1424" y="41" width="1" height="1" fill="#3c6a3a"/><rect x="1424" y="43" width="1" height="1" fill="#3c6a3a"/><rect x="1427" y="39" width="1" height="1" fill="#3c6a3a"/><rect x="1427" y="41" width="1" height="1" fill="#3c6a3a"/><rect x="1427" y="43" width="1" height="1" fill="#3c6a3a"/></svg>
<div style="left:251px;top:0px;width:24px;height:1px;background:#1266c2;"></div>
<div style="left:521px;top:0px;width:24px;height:1px;background:#1266c2;"></div>
<div style="left:791px;top:0px;width:24px;height:1px;background:#1266c2;"></div>
<div style="left:1061px;top:0px;width:13px;height:1px;background:#1266c2;"></div>
</div></body></html>
